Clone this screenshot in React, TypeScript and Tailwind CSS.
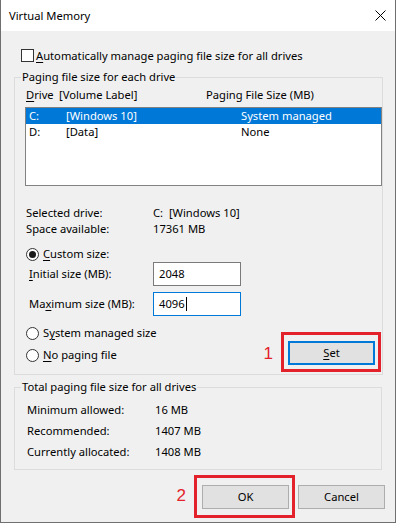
import React from 'react'

function Radio({ checked = false }: { checked?: boolean }) {
  return (
    <span className="w-[13px] h-[13px] rounded-full border border-[#333333] bg-white flex items-center justify-center shrink-0">
      {checked && <span className="w-[7px] h-[7px] rounded-full bg-[#1a1a1a]" />}
    </span>
  )
}

function WinButton({ children, focused = false }: { children: React.ReactNode; focused?: boolean }) {
  return (
    <button
      className={
        focused
          ? 'w-[87px] h-[24px] bg-[#e1e1e1] border-2 border-[#0078d7] flex items-center justify-center'
          : 'w-[87px] h-[24px] bg-[#e1e1e1] border border-[#adadad] flex items-center justify-center'
      }
    >
      {children}
    </button>
  )
}

export default function App() {
  return (
    <div className="w-[396px] h-[523px] bg-[#f0f0f0] border-x border-b border-[#6f6f6f] flex flex-col text-[11.2px] leading-[16px] text-black font-['Noto_Sans',sans-serif] overflow-hidden">
      {/* Title bar */}
      <div className="h-[31px] bg-white flex items-center justify-between pl-[8px] pr-[9px] shrink-0">
        <span>Virtual Memory</span>
        <svg width="11" height="11" viewBox="0 0 11 11" className="mt-[-1px]">
          <path d="M0.5 0.5 L10.5 10.5 M10.5 0.5 L0.5 10.5" stroke="#000" strokeWidth="1" />
        </svg>
      </div>

      <div className="flex flex-col px-[13px]">
        {/* Auto manage checkbox */}
        <div className="flex items-center h-[13px] mt-[18px] pl-[7px]">
          <span className="w-[13px] h-[13px] border border-[#333333] bg-white shrink-0" />
          <span className="ml-[2px]">
            <u className="underline-offset-2">A</u>utomatically manage paging file size for all drives
          </span>
        </div>

        {/* Paging file size for each drive */}
        <fieldset className="mt-[7px] border border-[#dcdcdc] pb-[2px]">
          <legend className="ml-[6px] px-[1px] leading-[16px]">Paging file size for each drive</legend>

          <div className="flex h-[16px] mt-[2px] pl-[11px]">
            <span className="w-[33px]">
              <u className="underline-offset-2">D</u>rive
            </span>
            <span className="w-[147px]">[Volume Label]</span>
            <span>Paging File Size (MB)</span>
          </div>

          <div className="ml-[10px] mt-[4px] w-[357px] h-[79px] border border-[#828282] bg-white">
            <div className="flex h-[16px] bg-[#0078d7] text-white pl-[3px]">
              <span className="w-[37px]">C:</span>
              <span className="w-[175px]">[Windows 10]</span>
              <span>System managed</span>
            </div>
            <div className="flex h-[16px] pl-[3px]">
              <span className="w-[37px]">D:</span>
              <span className="w-[175px]">[Data]</span>
              <span>None</span>
            </div>
          </div>

          <div className="flex flex-col mt-[19px] pl-[11px]">
            <div className="flex h-[16px]">
              <span className="w-[127px]">Selected drive:</span>
              <span>C:&nbsp; [Windows 10]</span>
            </div>
            <div className="flex h-[16px]">
              <span className="w-[127px]">Space available:</span>
              <span>17361 MB</span>
            </div>
          </div>

          <div className="flex items-center h-[16px] mt-[9px] pl-[11px] gap-[4px]">
            <Radio checked />
            <span>
              <u className="underline-offset-2">C</u>ustom size:
            </span>
          </div>

          <div className="flex items-center h-[24px] pl-[14px]">
            <span className="w-[124px]">
              <u className="underline-offset-2">I</u>nitial size (MB):
            </span>
            <div className="w-[88px] h-[24px] border border-[#7a7a7a] bg-white flex items-center pl-[5px]">2048</div>
          </div>

          <div className="flex items-center h-[24px] mt-[6px] pl-[14px]">
            <span className="w-[124px]">
              Ma<u className="underline-offset-2">x</u>imum size (MB):
            </span>
            <div className="w-[88px] h-[24px] border border-[#0078d7] bg-white flex items-center pl-[5px]">
              4096
              <span className="w-[1px] h-[14px] bg-black ml-[1px]" />
            </div>
          </div>

          <div className="flex">
            <div className="flex flex-col pt-[9px] pl-[11px] gap-[6px]">
              <div className="flex items-center h-[16px] gap-[4px]">
                <Radio />
                <span>
                  S<u className="underline-offset-2">y</u>stem managed size
                </span>
              </div>
              <div className="flex items-center h-[16px] gap-[4px]">
                <Radio />
                <span>
                  <u className="underline-offset-2">N</u>o paging file
                </span>
              </div>
            </div>

            <div className="ml-auto mr-[1px] pt-[16px] flex items-center">
              <span className="text-[17px] leading-[20px] text-[#e3212b] mr-[8px] mt-[3px] font-['Liberation_Sans',sans-serif]">1</span>
              <div className="w-[100px] h-[40px] border-[3px] border-[#e3212b] pt-[6px] pl-[4px]">
                <WinButton focused>
                  <span>
                    <u className="underline-offset-2">S</u>et
                  </span>
                </WinButton>
              </div>
            </div>
          </div>
        </fieldset>

        {/* Totals */}
        <fieldset className="mt-[4px] border border-[#dcdcdc] pb-[7px]">
          <legend className="ml-[6px] px-[1px] leading-[16px]">Total paging file size for all drives</legend>
          <div className="flex flex-col mt-[4px] pl-[12px]">
            <div className="flex items-center h-[21px]">
              <span className="w-[128px]">Minimum allowed:</span>
              <span>16 MB</span>
            </div>
            <div className="flex items-center h-[21px]">
              <span className="w-[128px]">Recommended:</span>
              <span>1407 MB</span>
            </div>
            <div className="flex items-center h-[21px]">
              <span className="w-[128px]">Currently allocated:</span>
              <span>1408 MB</span>
            </div>
          </div>
        </fieldset>

        {/* Bottom buttons */}
        <div className="flex justify-end items-start mt-[5px] mr-[-3px]">
          <span className="text-[17px] leading-[20px] text-[#e3212b] mt-[11px] mr-[8px] font-['Liberation_Sans',sans-serif]">2</span>
          <div className="w-[101px] h-[43px] border-[3px] border-[#e3212b] pt-[7px] pl-[5px]">
            <WinButton>OK</WinButton>
          </div>
          <div className="mt-[10px] ml-[3px]">
            <WinButton>Cancel</WinButton>
          </div>
        </div>
      </div>
    </div>
  )
}
